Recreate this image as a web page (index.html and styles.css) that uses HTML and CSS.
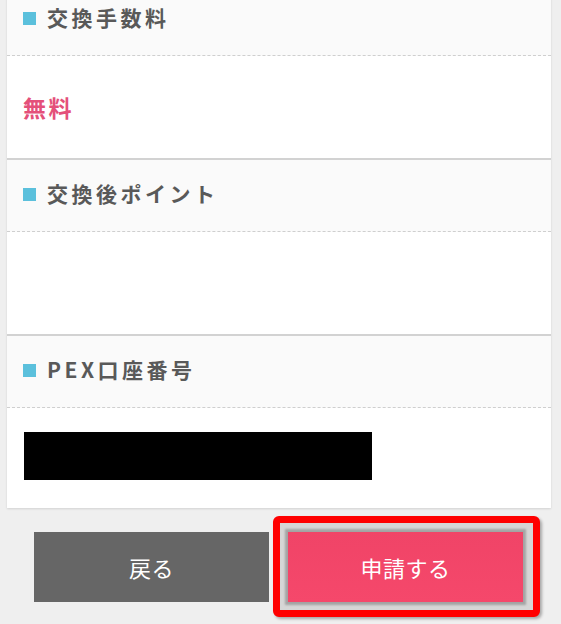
FILE: index.html
```html
<!DOCTYPE html>
<html lang="ja">
<head>
<meta charset="utf-8">
<title>交換申請</title>
<link rel="stylesheet" href="styles.css">
</head>
<body>
<div class="card">
  <div class="head"><span class="mark"></span><span class="title">交換手数料</span></div>
  <div class="body"><span class="free">無料</span></div>
  <div class="head"><span class="mark"></span><span class="title">交換後ポイント</span></div>
  <div class="body"></div>
  <div class="head"><span class="mark"></span><span class="title">PEX口座番号</span></div>
  <div class="body last"><div class="redact"></div></div>
</div>
<div class="actions">
  <button class="btn back">戻る</button>
  <div class="highlight">
    <button class="btn apply">申請する</button>
  </div>
</div>
</body>
</html>
```

FILE: styles.css
```css
html, body {
  margin: 0;
  padding: 0;
  background: #efefef;
  overflow: hidden;
}
body {
  font-family: "Noto Sans CJK JP", "Noto Sans", sans-serif;
  height: 624px;
}
.card {
  margin: -16px 10px 0 7px;
  width: 544px;
  background: #fff;
  box-shadow: 0 1px 2px rgba(0, 0, 0, 0.12);
}
.head {
  height: 67px;
  padding: 0 0 4px 16px;
  background: #fafafa;
  border-bottom: 1px dashed #cfcfcf;
  display: flex;
  align-items: center;
  box-sizing: content-box;
}
.mark {
  width: 13px;
  height: 13px;
  background: #5bc0dc;
  margin-right: 11px;
  margin-top: 1px;
}
.title {
  font-size: 21px;
  font-weight: 700;
  color: #595959;
  letter-spacing: 3.5px;
  line-height: 1;
}
.body {
  height: 102px;
  border-bottom: 2px solid #d2d2d2;
  display: flex;
  align-items: center;
  padding-left: 16px;
}
.body.last {
  height: 100px;
  border-bottom: none;
  align-items: flex-start;
}
.free {
  font-size: 23px;
  font-weight: 700;
  color: #e4507a;
  letter-spacing: 2.5px;
  line-height: 1;
  margin-top: 1px;
}
.redact {
  margin-top: 24px;
  margin-left: 1px;
  width: 348px;
  height: 48px;
  background: #000;
}
.actions {
  display: flex;
  align-items: center;
  padding: 8px 0 0 34px;
}
.btn {
  width: 235px;
  height: 70px;
  border: none;
  margin: 0;
  padding: 0;
  color: #fff;
  font-family: "Noto Sans CJK JP", "Noto Sans", sans-serif;
  font-size: 22px;
  letter-spacing: 0.5px;
}
.back {
  background: #666;
}
.highlight {
  margin-left: 4px;
  border: 7px solid #ff0000;
  border-radius: 6px;
  padding: 9px 10px 8px 8px;
  background: #d6d6d6;
  box-shadow: 2px 2px 3px rgba(0, 0, 0, 0.3);
  display: flex;
}
.apply {
  background: linear-gradient(#f04467, #f5486b);
  box-shadow: 0 0 2px 3px #a3a3a3;
}
```
